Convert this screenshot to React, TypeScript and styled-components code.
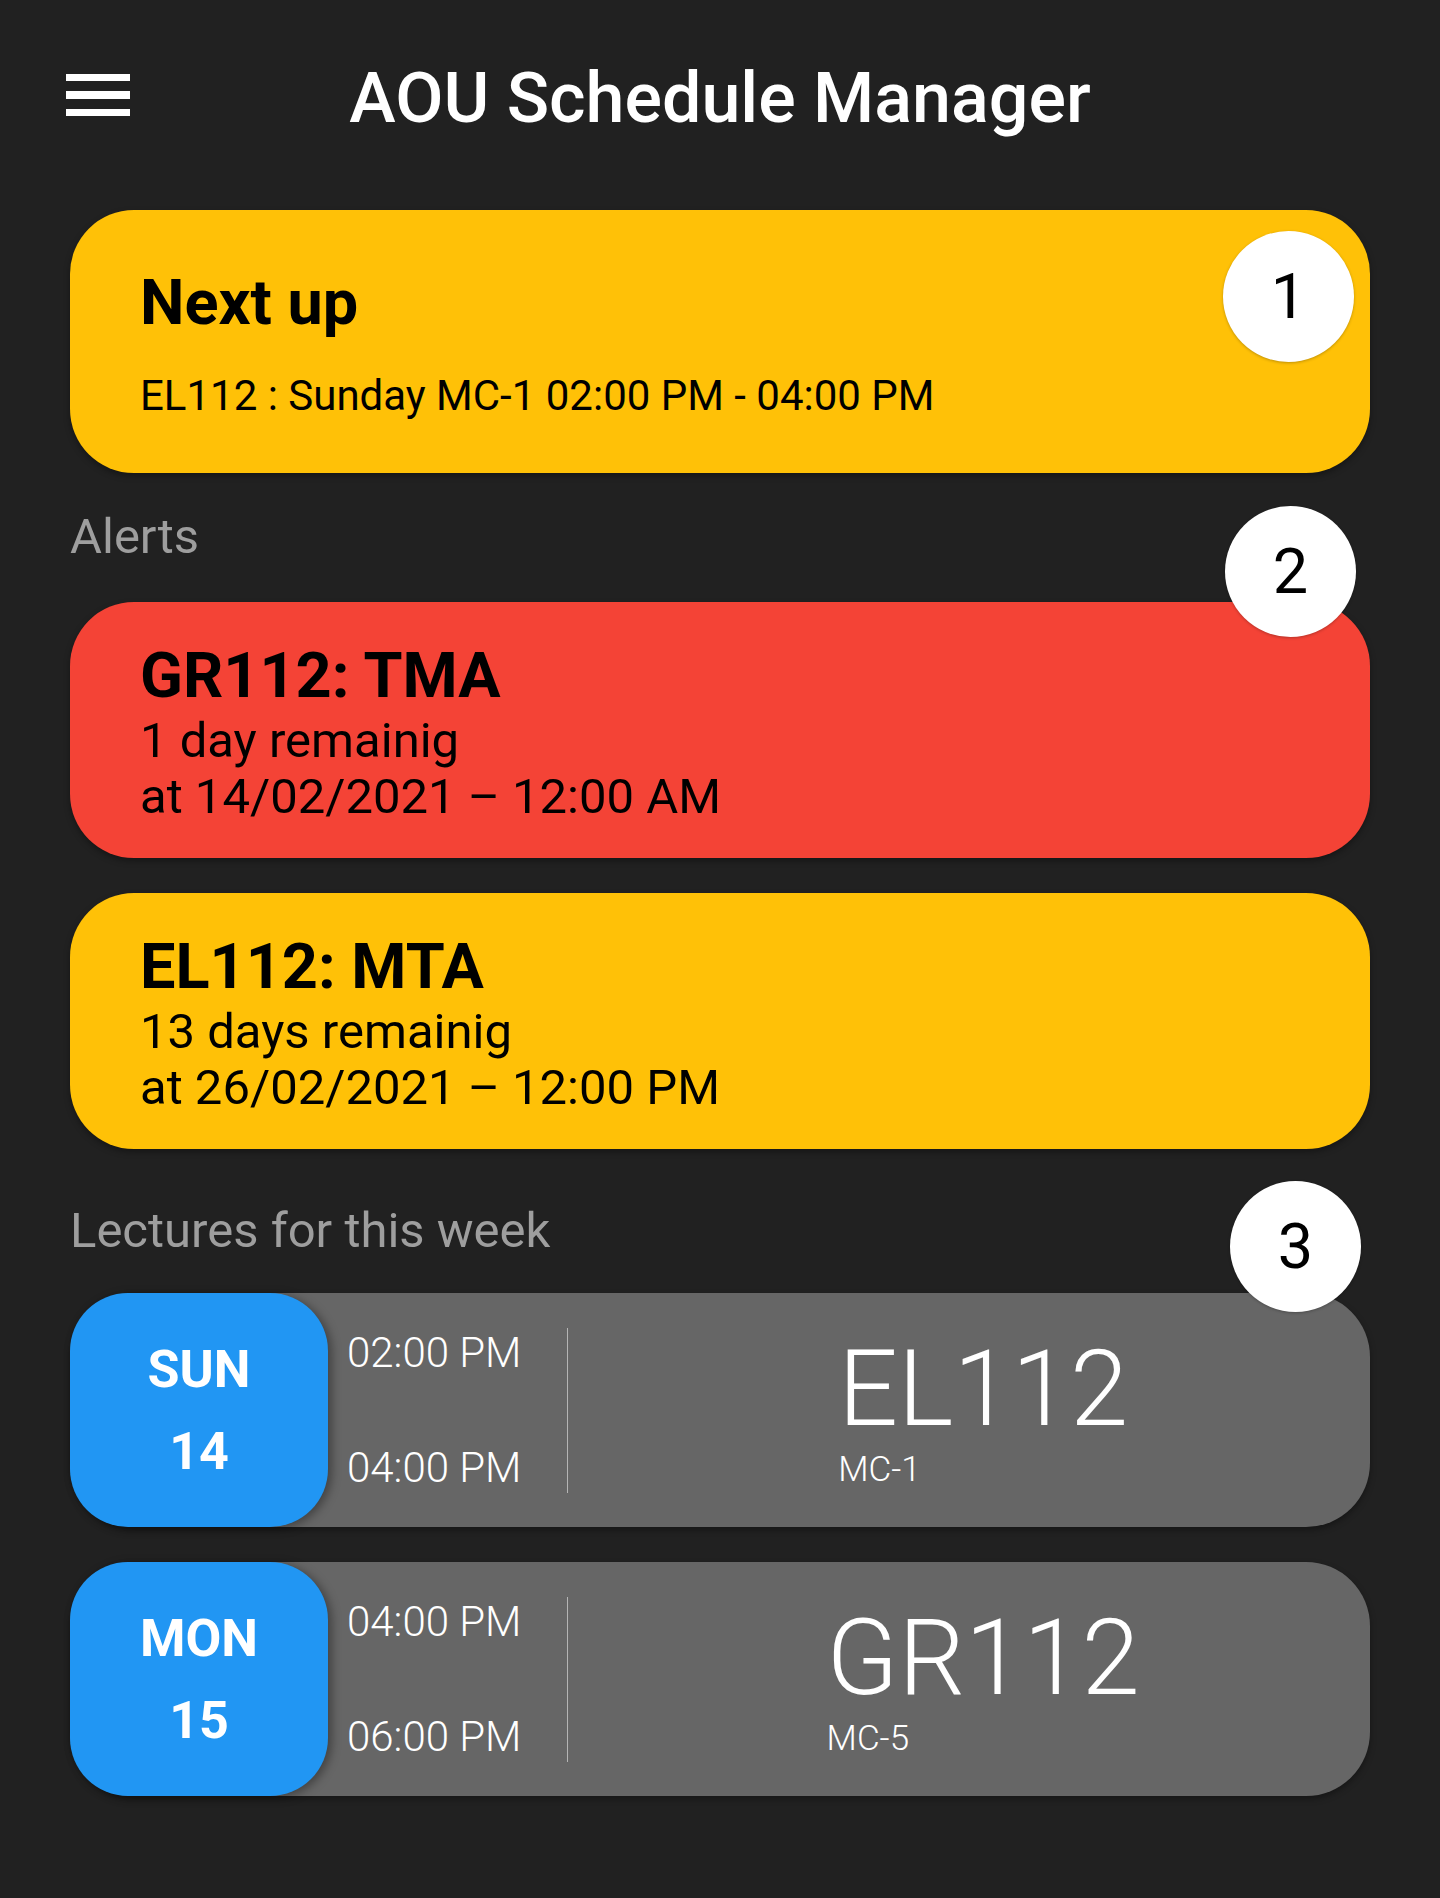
import React from "react";
import styled, { createGlobalStyle } from "styled-components";

const Global = createGlobalStyle`
  html, body {
    margin: 0;
    padding: 0;
    background: #212121;
  }
  body {
    font-family: Roboto, "Noto Sans", "Liberation Sans", sans-serif;
    color: #000;
  }
  * { box-sizing: border-box; }
`;

const Page = styled.div`
  min-height: 1898px;
  background: #212121;
`;

const Header = styled.header`
  height: 190px;
  padding: 0 66px;
  display: grid;
  grid-template-columns: 1fr auto 1fr;
  align-items: center;
`;

const MenuButton = styled.button`
  justify-self: start;
  width: 64px;
  display: flex;
  flex-direction: column;
  gap: 10px;
  padding: 0;
  background: none;
  border: none;
`;

const Bar = styled.span`
  display: block;
  height: 7.5px;
  width: 64px;
  background: #fff;
`;

const Title = styled.h1`
  margin: 0;
  padding-top: 5px;
  font-family: Roboto, "Liberation Sans", sans-serif;
  font-weight: 500;
  font-size: 70px;
  line-height: 84px;
  color: #fff;
  white-space: nowrap;
`;

const Content = styled.main`
  padding: 20px 70px 0;
`;

const Badge = styled.div<{ $top: number; $right: number }>`
  position: absolute;
  top: ${(p) => p.$top}px;
  right: ${(p) => p.$right}px;
  width: 131px;
  height: 131px;
  border-radius: 50%;
  background: #fff;
  display: flex;
  align-items: center;
  justify-content: center;
  font-family: Roboto, "Liberation Sans", sans-serif;
  font-size: 63px;
  font-weight: 400;
  color: #000;
  box-shadow: 0 1px 3px rgba(0, 0, 0, 0.25);
  z-index: 2;
`;

const Card = styled.section<{ $bg: string }>`
  position: relative;
  background: ${(p) => p.$bg};
  border-radius: 64px;
  box-shadow: 0 3px 6px rgba(0, 0, 0, 0.35);
`;

const NextCard = styled(Card)`
  padding: 55px 70px 52px;
  display: flex;
  flex-direction: column;
  gap: 30px;
`;

const CardTitle = styled.h2<{ $lh: number }>`
  margin: 0;
  font-weight: 700;
  font-size: 63px;
  line-height: ${(p) => p.$lh}px;
  color: #000;
`;

const NextLine = styled.p`
  margin: 0;
  font-size: 42px;
  line-height: 50px;
  font-weight: 400;
  color: #000;
`;

const SectionLabel = styled.h3<{ $mt: number; $mb: number }>`
  margin: ${(p) => p.$mt}px 0 ${(p) => p.$mb}px;
  font-weight: 400;
  font-size: 49px;
  line-height: 54px;
  color: #9e9e9e;
`;

const List = styled.div`
  display: flex;
  flex-direction: column;
  gap: 35px;
`;

const AlertCard = styled(Card)`
  padding: 36px 70px 33px;
`;

const AlertLine = styled.p`
  margin: 0;
  font-size: 49px;
  line-height: 56px;
  font-weight: 400;
  color: #000;
`;

const LectureCard = styled(Card)`
  height: 234px;
  display: flex;
  align-items: stretch;
`;

const DayBox = styled.div`
  width: 258px;
  flex: none;
  background: #2196f3;
  border-radius: 58px;
  box-shadow: 4px 2px 10px rgba(0, 0, 0, 0.35);
  display: flex;
  flex-direction: column;
  align-items: center;
  padding-top: 47px;
  gap: 22px;
  color: #fff;
  font-weight: 700;
  font-size: 52px;
  line-height: 60px;
  z-index: 1;
`;

const TimeCol = styled.div`
  margin-left: 19px;
  padding: 35px 0 34px;
  display: flex;
  flex-direction: column;
  justify-content: space-between;
`;

const Time = styled.span`
  font-weight: 300;
  font-size: 42px;
  line-height: 50px;
  color: #fff;
  white-space: nowrap;
`;

const Divider = styled.div`
  width: 1px;
  height: 165px;
  align-self: center;
  margin-left: 46px;
  background: #b5b5b5;
`;

const CourseArea = styled.div`
  flex: 1;
  display: flex;
  justify-content: center;
  padding: 43px 0 0 28px;
`;

const CourseBlock = styled.div`
  display: flex;
  flex-direction: column;
  align-items: flex-start;
  gap: 5px;
`;

const CourseCode = styled.span`
  font-weight: 300;
  font-size: 105px;
  line-height: 108px;
  color: #fff;
`;

const Room = styled.span`
  font-weight: 300;
  font-size: 35px;
  line-height: 42px;
  color: #fff;
`;

type Alert = { title: string; remaining: string; at: string; bg: string };
const alerts: Alert[] = [
  { title: "GR112: TMA", remaining: "1 day remainig", at: "at 14/02/2021 – 12:00 AM", bg: "#f44336" },
  { title: "EL112: MTA", remaining: "13 days remainig", at: "at 26/02/2021 – 12:00 PM", bg: "#ffc107" },
];

type Lecture = { day: string; date: string; start: string; end: string; code: string; room: string };
const lectures: Lecture[] = [
  { day: "SUN", date: "14", start: "02:00 PM", end: "04:00 PM", code: "EL112", room: "MC-1" },
  { day: "MON", date: "15", start: "04:00 PM", end: "06:00 PM", code: "GR112", room: "MC-5" },
];

export default function App() {
  return (
    <Page>
      <Global />
      <Header>
        <MenuButton aria-label="menu">
          <Bar />
          <Bar />
          <Bar />
        </MenuButton>
        <Title>AOU Schedule Manager</Title>
        <span />
      </Header>
      <Content>
        <NextCard $bg="#ffc107">
          <Badge $top={21} $right={16}>1</Badge>
          <CardTitle $lh={76}>Next up</CardTitle>
          <NextLine>EL112 : Sunday MC-1 02:00 PM - 04:00 PM</NextLine>
        </NextCard>

        <SectionLabel $mt={37} $mb={38}>Alerts</SectionLabel>
        <List>
          {alerts.map((a, i) => (
            <AlertCard key={a.title} $bg={a.bg}>
              {i === 0 && <Badge $top={-96} $right={14}>2</Badge>}
              <CardTitle $lh={75}>{a.title}</CardTitle>
              <AlertLine>{a.remaining}</AlertLine>
              <AlertLine>{a.at}</AlertLine>
            </AlertCard>
          ))}
        </List>

        <SectionLabel $mt={55} $mb={35}>Lectures for this week</SectionLabel>
        <List>
          {lectures.map((l, i) => (
            <LectureCard key={l.code} $bg="#666666">
              {i === 0 && <Badge $top={-112} $right={9}>3</Badge>}
              <DayBox>
                <span>{l.day}</span>
                <span>{l.date}</span>
              </DayBox>
              <TimeCol>
                <Time>{l.start}</Time>
                <Time>{l.end}</Time>
              </TimeCol>
              <Divider />
              <CourseArea>
                <CourseBlock>
                  <CourseCode>{l.code}</CourseCode>
                  <Room>{l.room}</Room>
                </CourseBlock>
              </CourseArea>
            </LectureCard>
          ))}
        </List>
      </Content>
    </Page>
  );
}
